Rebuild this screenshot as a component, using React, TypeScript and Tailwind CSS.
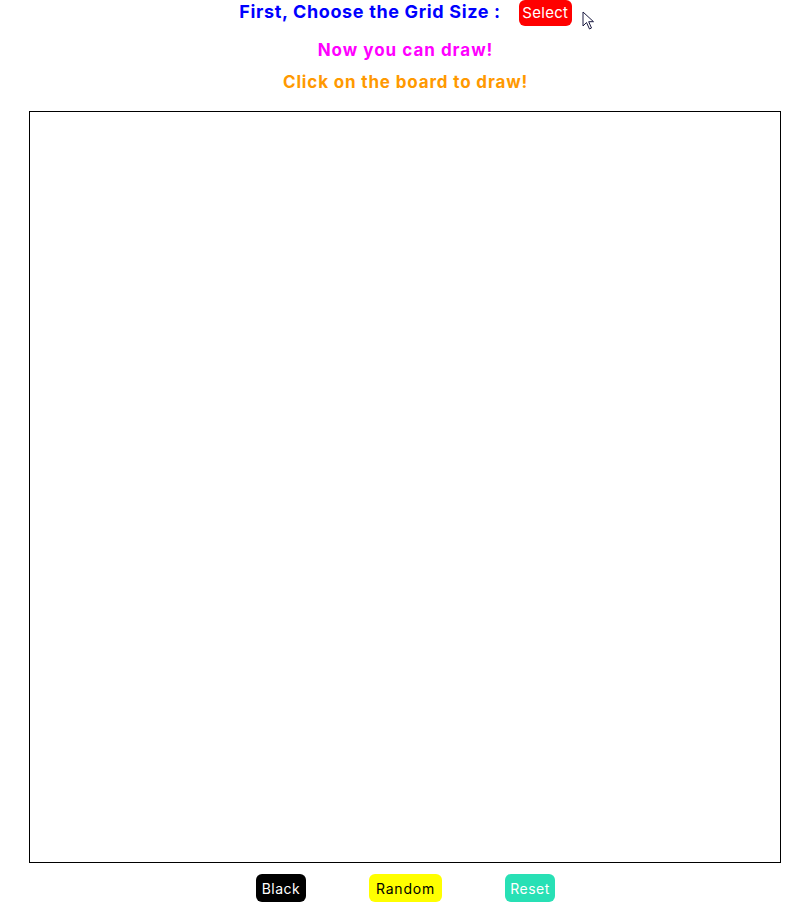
export default function App() {
  return (
    <div className="flex flex-col items-center bg-white font-['Inter','Open_Sans',sans-serif]">
      <div className="relative flex items-center h-[26px]">
        <h1 className="text-[18px] font-bold text-[#0000ff] tracking-[0.65px] leading-[24px] -mt-[2px]">First, Choose the Grid Size :</h1>
        <button className="ml-[18px] h-[26px] w-[53px] rounded-[6px] bg-[#ff0000] text-white text-[15px] tracking-[0.3px]">Select</button>
        {/* mouse pointer */}
        <svg className="absolute left-full top-[11px] ml-[10px]" width="14" height="20" viewBox="0 0 14 20">
          <path d="M1 1 L1 15 L4.5 11.5 L7.5 18 L9.5 17 L6.7 10.7 L11.5 10.7 Z" fill="white" stroke="#1a1a40" strokeWidth="1" strokeLinejoin="miter" />
        </svg>
      </div>
      <p className="mt-[12px] text-[17px] font-bold text-[#ff00ff] leading-[24px] tracking-[1px]">Now you can draw!</p>
      <p className="mt-[8px] text-[17px] font-bold text-[#ff9900] leading-[24px] tracking-[0.85px]">Click on the board to draw!</p>
      <div className="mt-[17px] mr-px w-[752px] h-[752px] border border-black" />
      <div className="flex items-center gap-[63px] mt-[11px]">
        <button className="h-[28px] w-[50px] rounded-[6px] bg-black text-white text-[14px] tracking-[0.5px]">Black</button>
        <button className="h-[28px] w-[73px] rounded-[6px] bg-[#ffff00] text-black text-[14px] tracking-[0.8px]">Random</button>
        <button className="h-[28px] w-[50px] rounded-[6px] bg-[#28e0b5] text-white text-[14px] tracking-[0.5px]">Reset</button>
      </div>
      <div className="h-[7px]" />
    </div>
  );
}
